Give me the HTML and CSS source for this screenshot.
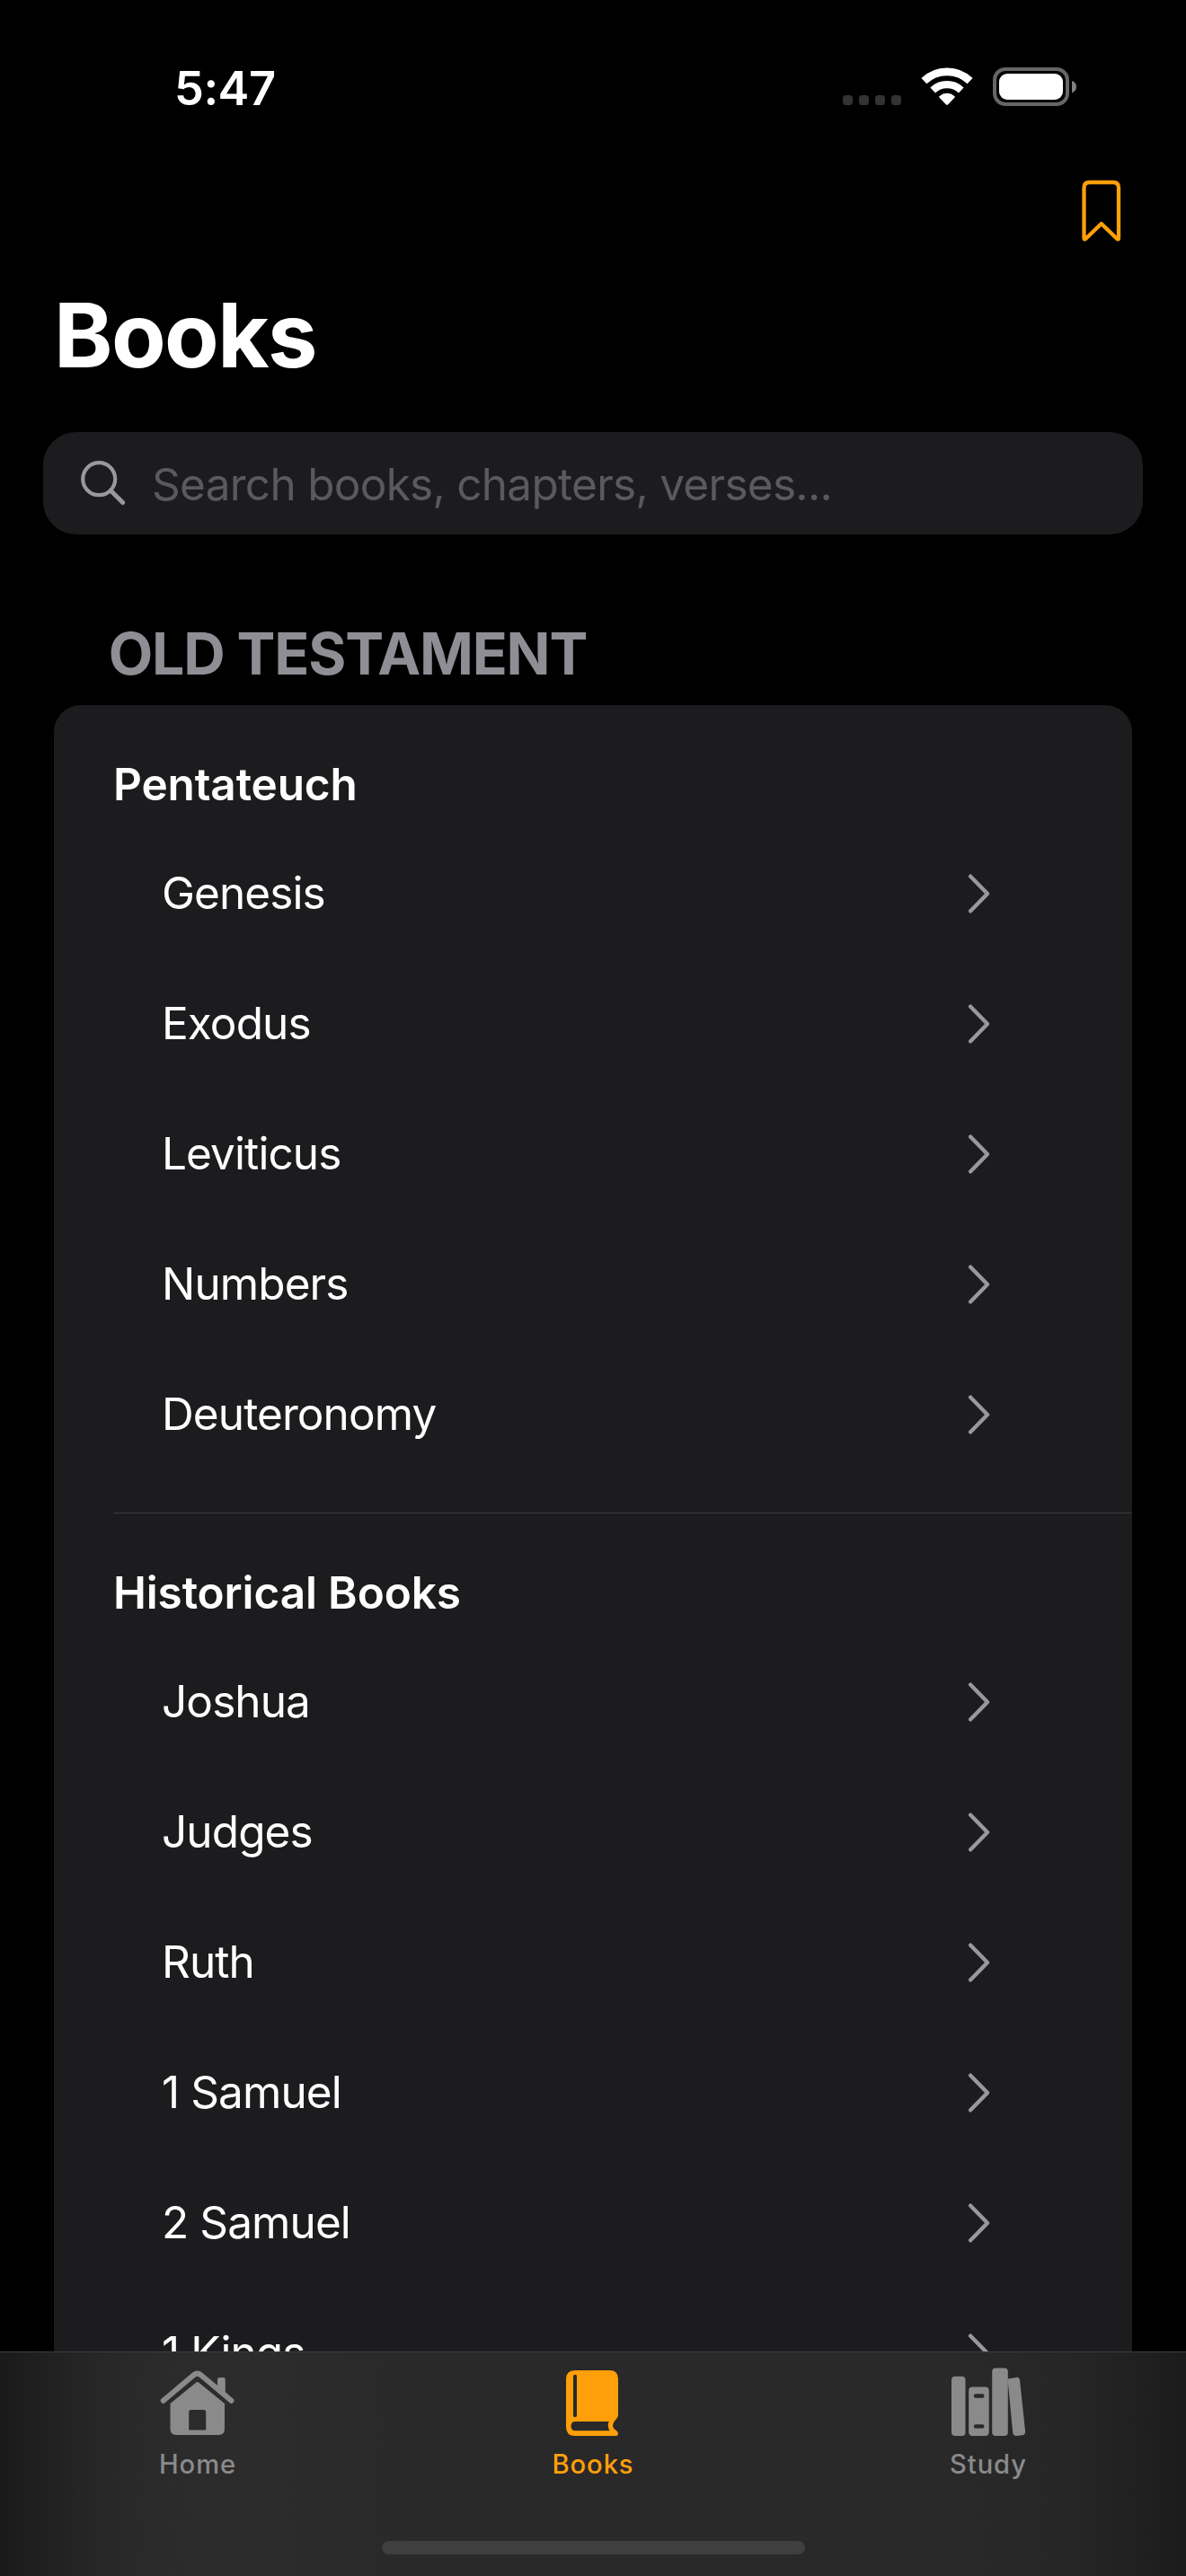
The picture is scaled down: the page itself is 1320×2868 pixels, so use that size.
FILE: index.html
```
<!DOCTYPE html>
<html lang="en">
<head>
<meta charset="utf-8">
<title>Books</title>
<link rel="stylesheet" href="styles.css">
</head>
<body>
<svg class="defs" aria-hidden="true">
  <symbol id="chevron" viewBox="0 0 26 46"><path d="M4.2 3.7 23 23 4.2 42.3" fill="none" stroke="currentColor" stroke-width="4.4" stroke-linecap="round" stroke-linejoin="round"/></symbol>
</svg>
<div class="screen">
  <header class="status">
    <span class="time">5:47</span>
    <div class="indicators">
      <svg class="signal" viewBox="0 0 65 11"><g fill="#333"><rect width="11" height="11" rx="3.5"/><rect x="18" width="11" height="11" rx="3.5"/><rect x="36" width="11" height="11" rx="3.5"/><rect x="54" width="11" height="11" rx="3.5"/></g></svg>
      <svg class="wifi" viewBox="0 0 58 42">
        <g fill="none" stroke="#fff">
          <path d="M3.4 15.2A37 37 0 0 1 54.6 15.2" stroke-width="8.6"/>
          <path d="M13.2 25.4A23 23 0 0 1 44.8 25.4" stroke-width="8.2"/>
        </g>
        <path d="M20.2 33.2Q19.8 32.4 20.7 31.9A12.6 12.6 0 0 1 37.3 31.9Q38.2 32.4 37.8 33.2L30 41.4Q29 42.2 28 41.4Z" fill="#fff"/>
      </svg>
      <svg class="battery" viewBox="0 0 93 43"><rect x="2" y="2" width="81" height="39" rx="12" fill="none" stroke="#666" stroke-width="4"/><rect x="7" y="7" width="71" height="29" rx="9" fill="#fff"/><path d="M88 15Q93 16.5 93 21.5T88 28.500Z" fill="#808080"/></svg>
    </div>
  </header>
  <nav class="toolbar">
    <svg class="bookmark" viewBox="0 0 44 70"><path d="M2.500 65V9Q2.500 3 8.500 3H35Q41 3 41 9V65Q41 67.200 39.300 66L21.800 49 4.200 66Q2.500 67.200 2.500 65Z" fill="none" stroke="#ff9f0a" stroke-width="4.300" stroke-linejoin="round"/></svg>
  </nav>
  <h1 class="title">Books</h1>
  <div class="search">
    <svg class="glass" viewBox="0 0 50 50"><circle cx="20.200" cy="20.200" r="18" fill="none" stroke="#98989f" stroke-width="4.200"/><path d="M33.300 33.300 46.600 46.600" stroke="#98989f" stroke-width="5" stroke-linecap="round"/></svg>
    <span class="placeholder">Search books, chapters, verses...</span>
  </div>
  <h2 class="section">OLD TESTAMENT</h2>
  <main class="card">
    <section class="group">
      <h3 class="heading">Pentateuch</h3>
      <ul class="list">
        <li class="row"><span class="name">Genesis</span><svg class="chevron"><use href="#chevron"/></svg></li>
        <li class="row"><span class="name">Exodus</span><svg class="chevron"><use href="#chevron"/></svg></li>
        <li class="row"><span class="name">Leviticus</span><svg class="chevron"><use href="#chevron"/></svg></li>
        <li class="row"><span class="name">Numbers</span><svg class="chevron"><use href="#chevron"/></svg></li>
        <li class="row"><span class="name">Deuteronomy</span><svg class="chevron"><use href="#chevron"/></svg></li>
      </ul>
    </section>
    <section class="group">
      <h3 class="heading">Historical Books</h3>
      <ul class="list">
        <li class="row"><span class="name">Joshua</span><svg class="chevron"><use href="#chevron"/></svg></li>
        <li class="row"><span class="name">Judges</span><svg class="chevron"><use href="#chevron"/></svg></li>
        <li class="row"><span class="name">Ruth</span><svg class="chevron"><use href="#chevron"/></svg></li>
        <li class="row"><span class="name">1 Samuel</span><svg class="chevron"><use href="#chevron"/></svg></li>
        <li class="row"><span class="name">2 Samuel</span><svg class="chevron"><use href="#chevron"/></svg></li>
        <li class="row"><span class="name">1 Kings</span><svg class="chevron"><use href="#chevron"/></svg></li>
      </ul>
    </section>
  </main>
  <footer class="tabbar">
    <div class="tabs">
      <a class="tab">
        <svg class="icon" viewBox="0 0 84 76">
          <path d="M4.200 37 38 8.500Q42 5.200 46 8.500L79.800 37" transform="translate(-.4 -.3)" fill="none" stroke="currentColor" stroke-width="6" stroke-linecap="round"/>
          <path d="M64 24V13.500Q64 11 66.500 11H70.300Q72.800 11 72.800 13.500V31Z" fill="currentColor"/>
          <path fill-rule="evenodd" d="M11.500 40 40 16.800Q41.700 15.200 43.400 16.800L72 40V68.500Q72 75 65.500 75H18Q11.500 75 11.500 68.500ZM32.200 69.500H51.200V49.500Q51.200 47 48.700 47H34.700Q32.200 47 32.200 49.500Z" fill="currentColor"/>
        </svg>
        <span class="label">Home</span>
      </a>
      <a class="tab tab-active">
        <svg class="icon" viewBox="0 0 84 76">
          <path fill-rule="evenodd" d="M22 3H60.500Q70 3 70 12.500V52.500Q70 55.500 67.500 57.700 64 61 64 64.500 64 67.500 67.500 69.800 70 71.300 70 73.500 70 76 67 76H22Q12 76 12 66V13Q12 3 22 3ZM22 7.800Q20 7.800 20 9.800V53.200Q20 55.200 22 55.200 24 55.200 24 53.200V9.800Q24 7.800 22 7.800ZM22.500 60Q17.500 60 17.500 65.200 17.500 70.300 22.500 70.300H60.500Q57.500 65 59.700 60Z" fill="currentColor"/>
        </svg>
        <span class="label">Books</span>
      </a>
      <a class="tab">
        <svg class="icon" viewBox="0 0 84 76">
          <g fill="currentColor">
            <rect x="1" y="9.700" width="15.500" height="66.300" rx="4"/>
            <path fill-rule="evenodd" d="M24.500 21.500H38.500Q42.700 21.500 42.700 25.700V71.800Q42.700 76 38.500 76H24.500Q20.200 76 20.200 71.800V25.700Q20.200 21.500 24.500 21.500ZM28 29.300A2.200 2.200 0 0 0 28 33.700H35.300A2.200 2.200 0 0 0 35.300 29.300ZM28 63.200A2.200 2.200 0 0 0 28 67.600H35.300A2.200 2.200 0 0 0 35.300 63.200Z"/>
            <rect x="46.200" y=".500" width="17.600" height="75.500" rx="4"/>
            <path d="M63.500 12.500 73 10.900Q76.700 10.500 77.100 14.500L83.100 71Q83.400 74.500 80 75.200L73.500 76Q69.600 76.200 69.200 72.200Z"/>
          </g>
        </svg>
        <span class="label">Study</span>
      </a>
    </div>
    <div class="home-indicator"></div>
  </footer>
</div>
</body>
</html>
```

FILE: styles.css
```
* { box-sizing: border-box; margin: 0; padding: 0; }

body {
  background: #000;
  color: #fff;
  font-family: Inter, "Liberation Sans", sans-serif;
}

.defs { display: none; }

.screen {
  position: relative;
  width: 1320px;
  height: 2868px;
  overflow: hidden;
  display: flex;
  flex-direction: column;
}

.status {
  flex: none;
  height: 150px;
  padding: 66px 122px 0 194px;
  display: flex;
  justify-content: space-between;
}
.time { font-size: 52.3px; line-height: 64px; font-weight: 600; letter-spacing: -0.5px; }
.indicators { display: flex; align-items: flex-end; height: 52px; }
.signal { width: 65px; height: 11px; margin: 0 22px 1px 0; }
.wifi { width: 58px; height: 42px; margin: 0 22px 1px 0; }
.battery { width: 93px; height: 43px; }

.toolbar {
  flex: none;
  height: 163px;
  padding: 50px 72px 0 0;
  display: flex;
  justify-content: flex-end;
}
.bookmark { width: 44px; height: 70px; }

.title {
  flex: none;
  padding-left: 60px;
  font-size: 99px;
  line-height: 120px;
  font-weight: 700;
  letter-spacing: -1.6px;
}

.search {
  flex: none;
  height: 114px;
  margin: 48px 48px 0;
  padding-left: 41.500px;
  display: flex;
  align-items: center;
  gap: 29.500px;
  background: #1c1c1e;
  border-radius: 37px;
}
.glass { width: 50px; height: 50px; }
.placeholder {
  padding-top: 2px;
  font-size: 49.5px;
  line-height: 60px;
  letter-spacing: -0.72px;
  color: #5a5a5e;
}

.section {
  flex: none;
  margin: 94px 0 18px 120.700px;
  font-size: 64.3px;
  line-height: 78px;
  font-weight: 700;
  letter-spacing: -1.17px;
  color: #8e8e94;
}

.card {
  flex: none;
  margin: 0 60px;
  background: #1c1c1e;
  border-radius: 30px;
}
.group { padding: 39px 0 37px 66px; }
.group + .group { position: relative; border-top: 1px solid #3c3c3f; margin-left: 66px; padding-left: 0; }
.heading {
  font-size: 49.5px;
  line-height: 98px;
  font-weight: 600;
  letter-spacing: -0.12px;
}
.list { list-style: none; padding: 0 157px 0 54px; }
.row { height: 145px; display: flex; align-items: center; justify-content: space-between; }
.name { padding-bottom: 1px; font-size: 49.5px; line-height: 60px; letter-spacing: -0.9px; }
.chevron { width: 26px; height: 46px; margin-right: 1px; color: #98989f; }

.tabbar {
  position: absolute;
  inset: auto 0 0 0;
  height: 250px;
  padding-top: 17px;
  display: flex;
  flex-direction: column;
  align-items: center;
  border-top: 1px solid #3d3d3e;
  background: linear-gradient(90deg, #1a1a1a 0, #1e1f1e 40px, #262726 110px, #2b2b2b 180px, #2c2c2c 280px, #292929 460px, #292929 1060px, #252625 1190px, #1f201f 1270px, #1a1b1a 1320px);
}
.tabs { display: flex; width: 100%; }
.tab {
  flex: 1;
  display: flex;
  flex-direction: column;
  align-items: center;
  gap: 14px;
  color: #8a8a8a;
}
.tab-active { color: #ff9f0a; }
.icon { width: 84px; height: 76px; overflow: visible; }
.label { font-size: 29.2px; line-height: 35px; font-weight: 500; letter-spacing: 0.9px; }
.home-indicator {
  width: 471px;
  height: 15px;
  margin-top: 68px;
  border-radius: 8px;
  background: #3f3f3f;
}
```
